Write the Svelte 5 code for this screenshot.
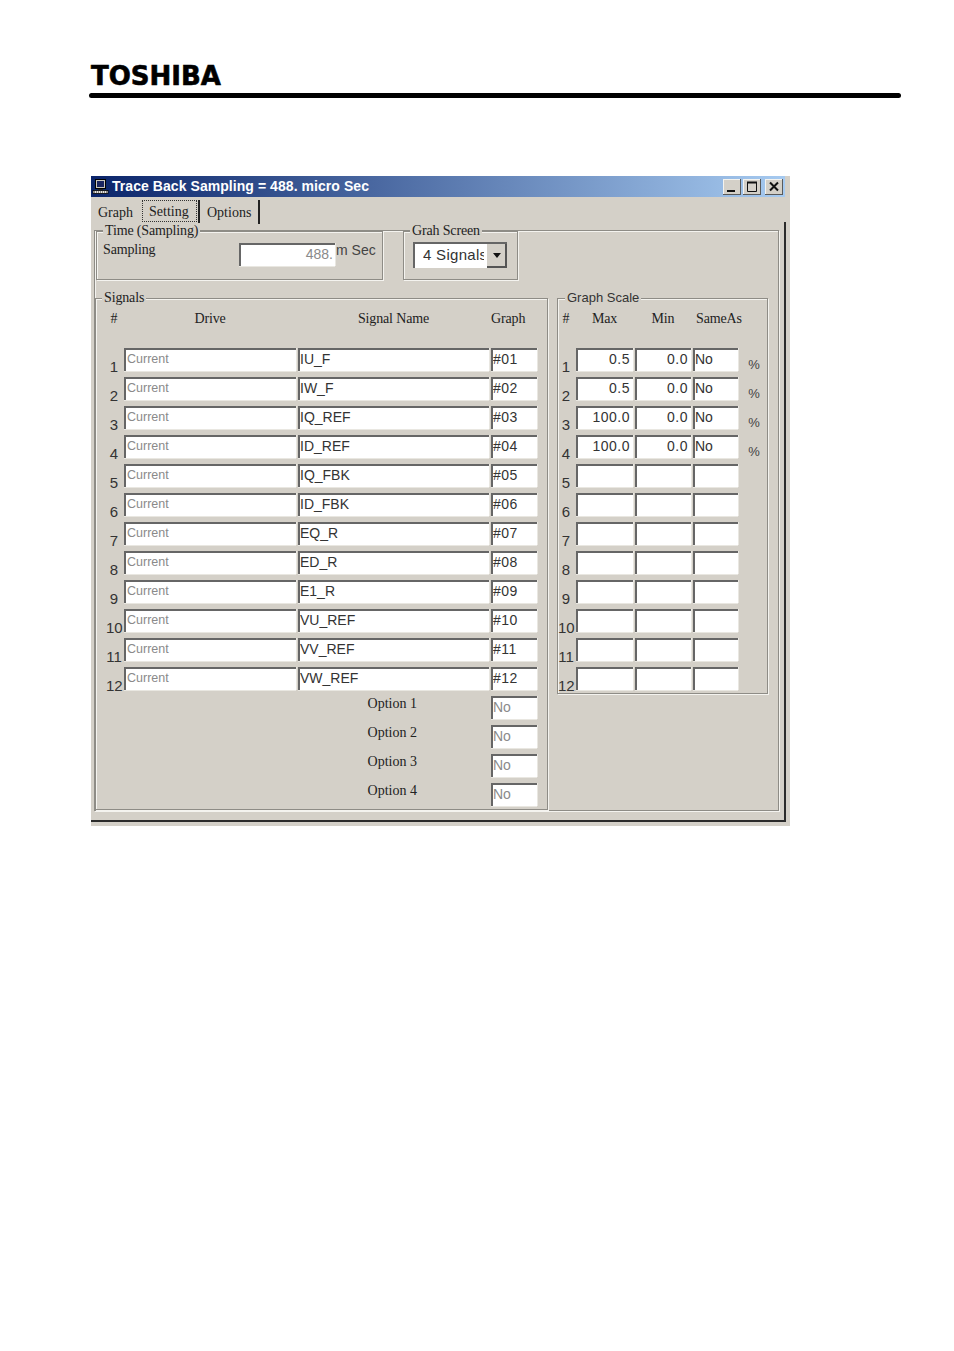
<script>
    const signals = ['IU_F', 'IW_F', 'IQ_REF', 'ID_REF', 'IQ_FBK', 'ID_FBK', 'EQ_R', 'ED_R', 'E1_R', 'VU_REF', 'VV_REF', 'VW_REF'];
    const rows = signals.map((name, i) => ({
        num: i + 1,
        name,
        graph: '#' + String(i + 1).padStart(2, '0')
    }));
    const options = ['Option 1', 'Option 2', 'Option 3', 'Option 4'];
    const scales = [
        { max: '0.5', min: '0.0', same: 'No', unit: '%' },
        { max: '0.5', min: '0.0', same: 'No', unit: '%' },
        { max: '100.0', min: '0.0', same: 'No', unit: '%' },
        { max: '100.0', min: '0.0', same: 'No', unit: '%' },
        ...Array(8).fill({ max: '', min: '', same: '', unit: '' })
    ];
</script>

<div class="page">
    <header class="head">
        <div class="logo">TOSHIBA</div>
        <div class="rule"></div>
    </header>

    <section class="win">
        <div class="title">
            <svg class="icon" width="17" height="17" viewBox="0 0 17 17">
                <rect x="3.5" y="1.5" width="10" height="9" fill="#c9c6be" stroke="#000"/>
                <rect x="5" y="3" width="7" height="6" fill="#1a2560"/>
                <rect x="6" y="11" width="5" height="1" fill="#222"/>
                <rect x="1" y="12.5" width="15" height="3" fill="#e8e6e0" stroke="#000" stroke-width="0.8"/>
                <path d="M2 14h13" stroke="#222" stroke-dasharray="1 1"/>
            </svg>
            <span class="caption">Trace Back Sampling = 488. micro Sec</span>
            <div class="winbtns">
                <div class="wb">
                    <svg width="18" height="16" viewBox="0 0 18 16"><rect x="4" y="11" width="8" height="2" fill="#111"/></svg>
                </div>
                <div class="wb">
                    <svg width="18" height="16" viewBox="0 0 18 16"><path d="M4.5 3.5h9v9h-9z" fill="none" stroke="#111"/><path d="M4 3.5h10" stroke="#111" stroke-width="2"/></svg>
                </div>
                <div class="wb close">
                    <svg width="18" height="16" viewBox="0 0 18 16"><path d="M5 3.5l8 8M13 3.5l-8 8" stroke="#111" stroke-width="2"/></svg>
                </div>
            </div>
        </div>

        <nav class="tabs">
            <span class="tab graph">Graph</span>
            <span class="tab setting"><span class="focus">Setting</span></span>
            <span class="tab opts">Options</span>
        </nav>

        <div class="panel">
            <div class="top">
                <div class="group time">
                    <span class="legend serif">Time (Sampling)</span>
                    <span class="serif sampling">Sampling</span>
                    <div class="field ro samp">488.</div>
                    <span class="msec">m Sec</span>
                </div>
                <div class="group screen">
                    <span class="legend serif">Grah Screen</span>
                    <div class="combo">
                        <span class="combo-text">4 Signals</span>
                        <span class="combo-btn">
                            <svg width="10" height="6" viewBox="0 0 10 6"><path d="M1 0h8L5 5z" fill="#111"/></svg>
                        </span>
                    </div>
                </div>
            </div>

            <div class="bottom">
                <div class="group signals">
                    <span class="legend serif">Signals</span>
                    <div class="grid sig-grid">
                        <span class="hd serif">#</span>
                        <span class="hd serif">Drive</span>
                        <span class="hd serif">Signal Name</span>
                        <span class="hd serif left">Graph</span>

                        {#each rows as r}
                            <span class="num">{r.num}</span>
                            <div class="field ro small">Current</div>
                            <div class="field">{r.name}</div>
                            <div class="field spaced">{r.graph}</div>
                        {/each}

                        {#each options as o}
                            <span class="opt-label serif">{o}</span>
                            <div class="field ro">No</div>
                        {/each}
                    </div>
                </div>

                <div class="group scale">
                    <span class="legend sans">Graph Scale</span>
                    <div class="grid scale-grid">
                        <span class="hd serif">#</span>
                        <span class="hd serif">Max</span>
                        <span class="hd serif">Min</span>
                        <span class="hd serif same">SameAs</span>
                        <span class="hd"></span>

                        {#each scales as s, i}
                            <span class="num">{i + 1}</span>
                            <div class="field right spaced">{s.max}</div>
                            <div class="field right spaced">{s.min}</div>
                            <div class="field">{s.same}</div>
                            <span class="unit">{s.unit}</span>
                        {/each}
                    </div>
                </div>
            </div>
        </div>
    </section>
</div>

<style>
    :global(body) {
        margin: 0;
        background: #fff;
    }

    .page {
        height: 1351px;
        overflow: hidden;
        font-family: "Liberation Sans", Arial, sans-serif;
    }

    .head {
        margin-left: 89px;
        padding-top: 60px;
        width: 812px;
    }

    .logo {
        margin-left: 2px;
        font-family: "DejaVu Sans", sans-serif;
        font-weight: bold;
        font-size: 26px;
        line-height: 32px;
        color: #000;
        -webkit-text-stroke: 0.6px #000;
    }

    .rule {
        height: 5px;
        margin-top: 1px;
        border-radius: 3px;
        background: #000;
    }

    .win {
        position: relative;
        box-sizing: border-box;
        width: 699px;
        height: 650px;
        margin: 78px 0 0 91px;
        background: #d4d0c8;
    }

    .win::after {
        content: '';
        position: absolute;
        left: 0;
        top: 46px;
        right: 4px;
        bottom: 4px;
        border-right: 2px solid #2b2b2b;
        border-bottom: 2px solid #2b2b2b;
        pointer-events: none;
    }

    .title {
        display: flex;
        align-items: center;
        height: 21px;
        width: 694px;
        background: linear-gradient(90deg, #0a246a, #a6caf0);
    }

    .icon {
        margin-left: 1px;
    }

    .caption {
        margin-left: 3px;
        margin-top: -2px;
        color: #fff;
        font-weight: bold;
        font-size: 14px;
        letter-spacing: 0.06px;
    }

    .winbtns {
        display: flex;
        gap: 2px;
        margin-left: auto;
        margin-right: 2px;
    }

    .wb {
        width: 18px;
        height: 16px;
        background: #d4d0c8;
        box-shadow: inset -1px -1px 0 #5a5a5a, inset 1px 1px 0 #f4f3ef;
    }

    .wb.close {
        margin-left: 2px;
    }

    .wb svg {
        display: block;
    }

    .serif {
        font-family: "Liberation Serif", "Times New Roman", serif;
        font-size: 14px;
        letter-spacing: -0.15px;
        color: #222;
    }

    .sans {
        font-family: "Liberation Sans", Arial, sans-serif;
        font-size: 13px;
        color: #333;
    }

    .tabs {
        display: flex;
        height: 33px;
        align-items: flex-start;
        font-family: "Liberation Serif", serif;
        font-size: 14px;
        color: #222;
    }

    .tab {
        line-height: 16px;
    }

    .graph {
        margin: 8px 0 0 7px;
        width: 44px;
    }

    .setting {
        margin-top: 3px;
        padding-right: 1px;
        border-right: 2px solid #222;
        height: 24px;
    }

    .focus {
        display: block;
        box-sizing: border-box;
        width: 55px;
        height: 22px;
        padding: 3px 0 0 6px;
        border: 1px dotted #333;
    }

    .opts {
        margin: 3px 0 0 0;
        padding: 5px 7px 3px 7px;
        border-right: 2px solid #222;
    }

    .panel {
        box-sizing: border-box;
        width: 685px;
        height: 581px;
        margin-left: 3px;
        border: 1px solid #8e8c86;
        box-shadow: inset 1px 1px 0 #f4f3ef, 1px 1px 0 #f4f3ef;
    }

    .top {
        display: flex;
        gap: 20px;
        padding-left: 1px;
    }

    .group {
        position: relative;
        box-sizing: border-box;
        border: 1px solid #8e8c86;
        box-shadow: inset 1px 1px 0 #f4f3ef, 1px 1px 0 #f4f3ef;
    }

    .legend {
        position: absolute;
        top: -9px;
        left: 6px;
        padding: 0 2px;
        line-height: 16px;
        background: #d4d0c8;
        white-space: nowrap;
    }

    .scale .legend {
        left: 7px;
    }

    .time {
        display: flex;
        align-items: flex-start;
        width: 287px;
        height: 49px;
        padding: 10px 0 0 6px;
    }

    .sampling {
        width: 136px;
        line-height: 16px;
    }

    .samp {
        box-sizing: border-box;
        width: 96px;
        height: 20px;
        margin-top: 1px;
        text-align: right;
    }

    .msec {
        margin-left: 1px;
        font-size: 14px;
        line-height: 16px;
        color: #444;
    }

    .screen {
        width: 115px;
        height: 49px;
        padding: 10px 0 0 9px;
    }

    .combo {
        display: flex;
        box-sizing: border-box;
        width: 94px;
        height: 26px;
        background: #fff;
        border-top: 2px solid #666;
        border-left: 2px solid #666;
    }

    .combo-text {
        width: 61px;
        margin-left: 8px;
        overflow: hidden;
        white-space: nowrap;
        font-size: 15px;
        letter-spacing: 0.3px;
        line-height: 22px;
        color: #333;
    }

    .combo-btn {
        display: flex;
        align-items: center;
        justify-content: center;
        width: 20px;
        margin-left: auto;
        background: #d4d0c8;
        box-shadow: inset -2px -2px 0 #555;
    }

    .bottom {
        display: flex;
        align-items: flex-start;
        gap: 9px;
        margin-top: 18px;
    }

    .signals {
        width: 453px;
        padding: 12px 0 0 10px;
        height: 512px;
    }

    .scale {
        width: 211px;
        padding-top: 12px;
        height: 396px;
    }

    .grid {
        display: grid;
        grid-auto-rows: 22px;
        grid-template-rows: 30px;
        column-gap: 2px;
        row-gap: 7px;
    }

    .sig-grid {
        grid-template-columns: 16px 172px 191px 46px;
    }

    .scale-grid {
        grid-template-columns: 16px 57px 56px 45px 25px;
    }

    .hd {
        text-align: center;
        line-height: 15px;
        white-space: nowrap;
    }

    .hd.left {
        text-align: left;
    }

    .hd.same {
        text-align: left;
        padding-left: 3px;
    }

    .num {
        padding-top: 11px;
        text-align: center;
        font-size: 15px;
        line-height: 16px;
        color: #333;
    }

    .field {
        box-sizing: border-box;
        height: 23px;
        padding: 0 2px 0 0;
        background: #fff;
        border-top: 2px solid #666;
        border-left: 2px solid #666;
        box-shadow: 0 1px 0 #e9e7e1, 1px 0 0 #e9e7e1;
        font-size: 14px;
        line-height: 19px;
        color: #333;
        white-space: nowrap;
        overflow: hidden;
    }

    .field.ro {
        color: #8a8a8a;
    }

    .field.small {
        padding-left: 1px;
        font-size: 12.5px;
    }

    .field.spaced {
        letter-spacing: 0.5px;
    }

    .field.right {
        text-align: right;
        padding-right: 3px;
    }

    .opt-label {
        grid-column: 1 / 4;
        justify-self: end;
        margin-right: 72px;
        line-height: 16px;
        letter-spacing: 0;
    }

    .sig-grid .field.ro:not(.small) {
        grid-column: 4;
    }

    .unit {
        padding: 9px 0 0 3px;
        text-align: center;
        font-size: 13px;
        line-height: 16px;
        color: #444;
    }
</style>
